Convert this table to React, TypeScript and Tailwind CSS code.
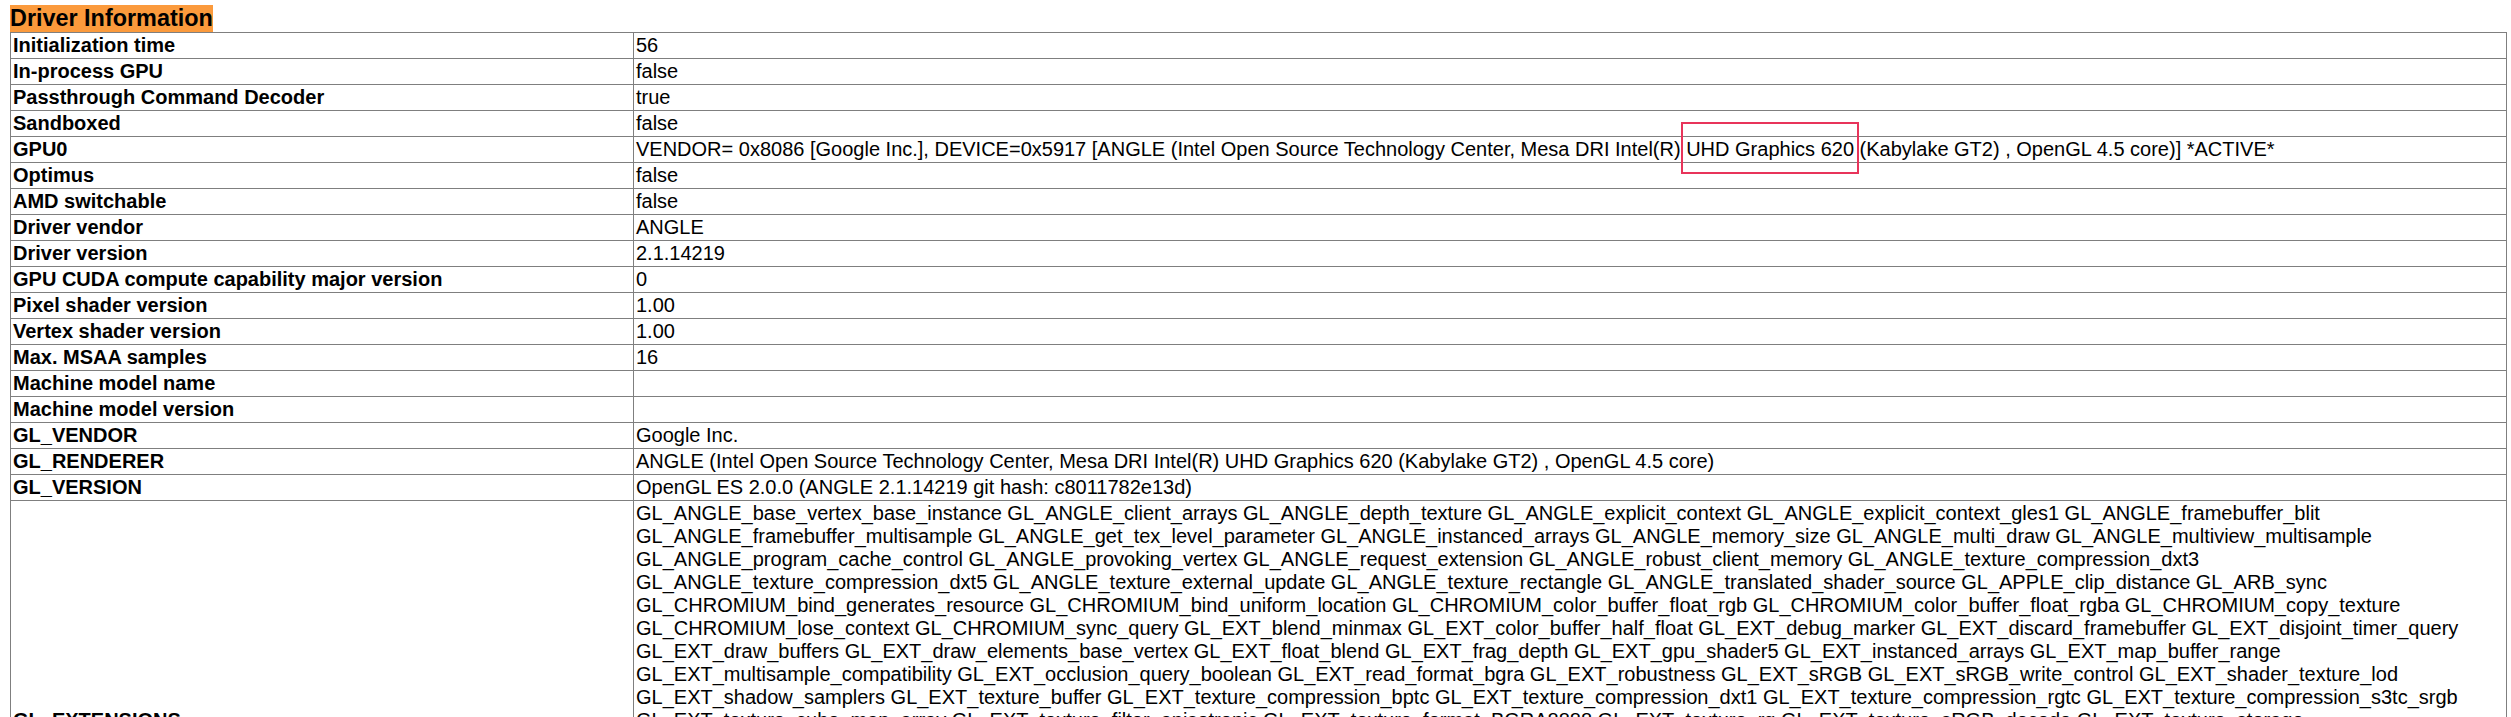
const rows: [string, string][] = [
  ["Initialization time", "56"],
  ["In-process GPU", "false"],
  ["Passthrough Command Decoder", "true"],
  ["Sandboxed", "false"],
  ["GPU0", "__GPU0__"],
  ["Optimus", "false"],
  ["AMD switchable", "false"],
  ["Driver vendor", "ANGLE"],
  ["Driver version", "2.1.14219"],
  ["GPU CUDA compute capability major version", "0"],
  ["Pixel shader version", "1.00"],
  ["Vertex shader version", "1.00"],
  ["Max. MSAA samples", "16"],
  ["Machine model name", ""],
  ["Machine model version", ""],
  ["GL_VENDOR", "Google Inc."],
  [
    "GL_RENDERER",
    "ANGLE (Intel Open Source Technology Center, Mesa DRI Intel(R) UHD Graphics 620 (Kabylake GT2) , OpenGL 4.5 core)",
  ],
  ["GL_VERSION", "OpenGL ES 2.0.0 (ANGLE 2.1.14219 git hash: c8011782e13d)"],
];

// one entry per rendered line, so the wrap matches the screenshot
const extensions = [
  "GL_ANGLE_base_vertex_base_instance GL_ANGLE_client_arrays GL_ANGLE_depth_texture GL_ANGLE_explicit_context GL_ANGLE_explicit_context_gles1 GL_ANGLE_framebuffer_blit",
  "GL_ANGLE_framebuffer_multisample GL_ANGLE_get_tex_level_parameter GL_ANGLE_instanced_arrays GL_ANGLE_memory_size GL_ANGLE_multi_draw GL_ANGLE_multiview_multisample",
  "GL_ANGLE_program_cache_control GL_ANGLE_provoking_vertex GL_ANGLE_request_extension GL_ANGLE_robust_client_memory GL_ANGLE_texture_compression_dxt3",
  "GL_ANGLE_texture_compression_dxt5 GL_ANGLE_texture_external_update GL_ANGLE_texture_rectangle GL_ANGLE_translated_shader_source GL_APPLE_clip_distance GL_ARB_sync",
  "GL_CHROMIUM_bind_generates_resource GL_CHROMIUM_bind_uniform_location GL_CHROMIUM_color_buffer_float_rgb GL_CHROMIUM_color_buffer_float_rgba GL_CHROMIUM_copy_texture",
  "GL_CHROMIUM_lose_context GL_CHROMIUM_sync_query GL_EXT_blend_minmax GL_EXT_color_buffer_half_float GL_EXT_debug_marker GL_EXT_discard_framebuffer GL_EXT_disjoint_timer_query",
  "GL_EXT_draw_buffers GL_EXT_draw_elements_base_vertex GL_EXT_float_blend GL_EXT_frag_depth GL_EXT_gpu_shader5 GL_EXT_instanced_arrays GL_EXT_map_buffer_range",
  "GL_EXT_multisample_compatibility GL_EXT_occlusion_query_boolean GL_EXT_read_format_bgra GL_EXT_robustness GL_EXT_sRGB GL_EXT_sRGB_write_control GL_EXT_shader_texture_lod",
  "GL_EXT_shadow_samplers GL_EXT_texture_buffer GL_EXT_texture_compression_bptc GL_EXT_texture_compression_dxt1 GL_EXT_texture_compression_rgtc GL_EXT_texture_compression_s3tc_srgb",
  "GL_EXT_texture_cube_map_array GL_EXT_texture_filter_anisotropic GL_EXT_texture_format_BGRA8888 GL_EXT_texture_rg GL_EXT_texture_sRGB_decode GL_EXT_texture_storage",
  "GL_EXT_texture_type_2_10_10_10_REV GL_EXT_unpack_subimage GL_KHR_debug GL_KHR_parallel_shader_compile GL_KHR_robust_buffer_access_behavior GL_NV_depth_buffer_float2",
  "GL_NV_fence GL_NV_framebuffer_blit GL_NV_pack_subimage GL_NV_pixel_buffer_object GL_NV_read_depth GL_NV_read_stencil GL_OES_compressed_EAC_R11_signed_texture",
  "GL_OES_compressed_EAC_R11_unsigned_texture GL_OES_compressed_EAC_RG11_signed_texture GL_OES_compressed_EAC_RG11_unsigned_texture GL_OES_compressed_ETC1_RGB8_texture",
  "GL_OES_compressed_ETC2_RGB8_texture GL_OES_compressed_ETC2_RGBA8_texture GL_OES_compressed_ETC2_punchthroughA_RGBA8_texture GL_OES_depth24 GL_OES_depth32",
  "GL_OES_depth_texture GL_OES_draw_elements_base_vertex GL_OES_element_index_uint GL_OES_fbo_render_mipmap GL_OES_get_program_binary GL_OES_mapbuffer GL_OES_packed_depth_stencil",
  "GL_OES_rgb8_rgba8 GL_OES_sample_shading GL_OES_sample_variables GL_OES_shader_image_atomic GL_OES_shader_multisample_interpolation GL_OES_standard_derivatives",
  "GL_OES_surfaceless_context GL_OES_texture_3D GL_OES_texture_border_clamp GL_OES_texture_float GL_OES_texture_float_linear GL_OES_texture_half_float GL_OES_texture_npot",
  "GL_OES_texture_stencil8 GL_OES_texture_storage_multisample_2d_array GL_OES_vertex_array_object GL_OES_vertex_half_float GL_OVR_multiview GL_OVR_multiview2",
  "GL_WEBGL_video_texture",
];

function Gpu0Value() {
  return (
    <>
      VENDOR= 0x8086 [Google Inc.], DEVICE=0x5917 [ANGLE (Intel Open Source Technology Center, Mesa DRI Intel(R){" "}
      <span className="relative">
        UHD Graphics 620
        {/* annotation box drawn over the screenshot */}
        <span className="pointer-events-none absolute -top-[16px] -bottom-[14px] -left-[5px] -right-[5px] border-2 border-[#e8345a]" />
      </span>{" "}
      (Kabylake GT2) , OpenGL 4.5 core)] *ACTIVE*
    </>
  );
}

export default function App() {
  return (
    <div className="min-h-screen bg-white text-black font-['Liberation_Sans',Arial,sans-serif] text-[20px] leading-[23px]">
      <div className="pt-[5px] pl-[10px]">
        <span className="inline-block bg-[#fb9a3c] text-[23.4px] font-bold leading-[27px]">Driver Information</span>
      </div>
      <table className="ml-[10px] w-[2497px] border-collapse border border-[#7f7f7f]">
        <tbody>
          {rows.map(([label, value]) => (
            <tr key={label}>
              <td className="w-[623px] border border-[#7f7f7f] px-[2px] py-px font-bold whitespace-nowrap">{label}</td>
              <td className="border border-[#7f7f7f] px-[2px] py-px whitespace-nowrap">
                {value === "__GPU0__" ? <Gpu0Value /> : value}
              </td>
            </tr>
          ))}
          <tr>
            <td className="w-[623px] border border-[#7f7f7f] px-[2px] py-px font-bold">GL_EXTENSIONS</td>
            <td className="border border-[#7f7f7f] px-[2px] py-px">
              {extensions.map((line) => (
                <div key={line} className="whitespace-nowrap">
                  {line}
                </div>
              ))}
            </td>
          </tr>
        </tbody>
      </table>
    </div>
  );
}
